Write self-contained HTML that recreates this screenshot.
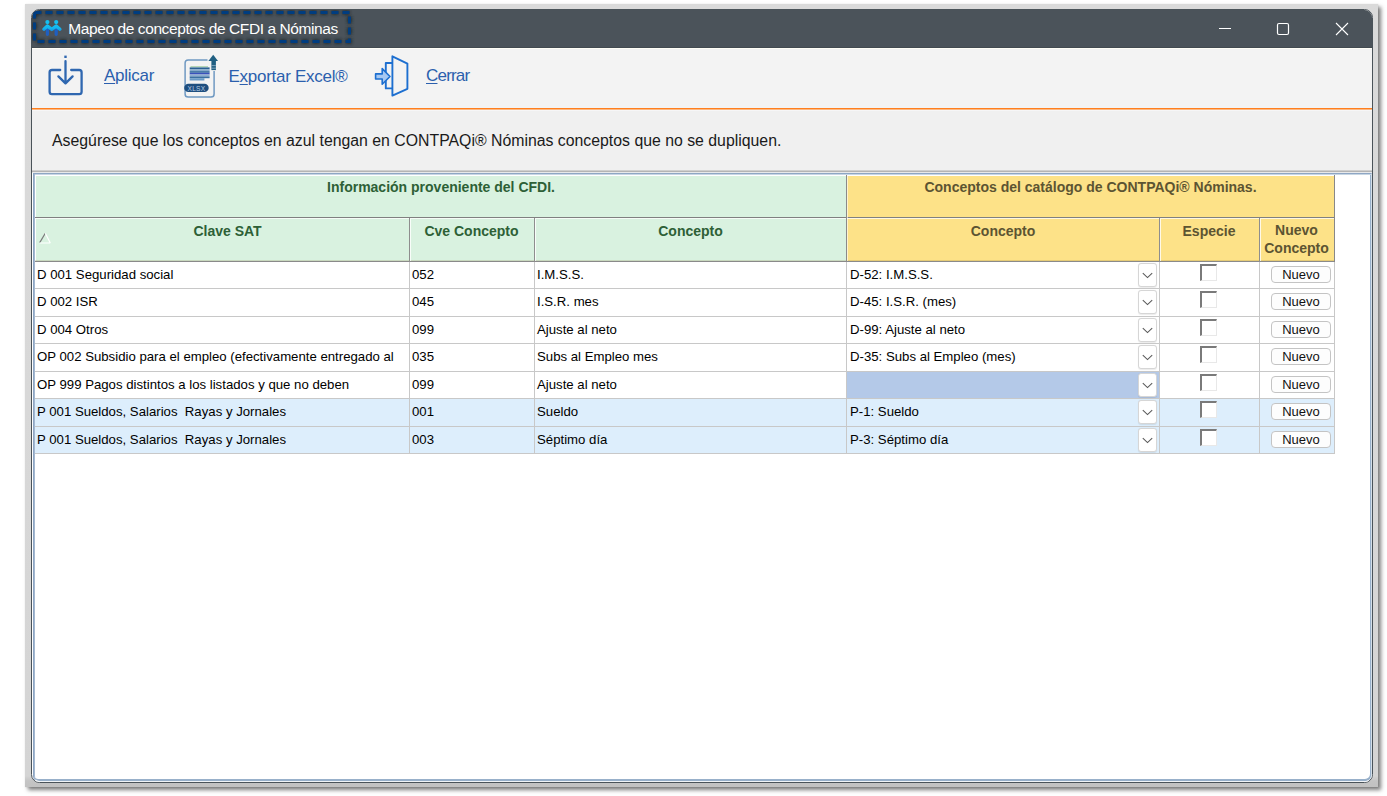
<!DOCTYPE html>
<html><head><meta charset="utf-8">
<style>
*{margin:0;padding:0;box-sizing:border-box}
html,body{width:1387px;height:796px;overflow:hidden;background:#fff;font-family:"Liberation Sans",sans-serif;position:relative}
.a{position:absolute}
#frame{left:25px;top:4px;width:1353px;height:783px;background:linear-gradient(to bottom,#dadada 0,#d8d8d8 400px,#d4d4d4 772px,#c4c4c4 777px,#c2c2c2 783px);box-shadow:0 0 1.5px 0.5px rgba(0,0,0,.10),3px 3px 4px rgba(0,0,0,.5)}
#win{left:31px;top:9px;width:1342px;height:774px;border:1px solid #4a5359;border-radius:8.5px;background:#fff;overflow:hidden}
#c{left:-32px;top:-10px;width:1387px;height:796px}
#title{left:0;top:0;width:1387px;height:48px;background:#4b535a;border-bottom:1px solid #424a50}
#tb{left:0;top:48px;width:1387px;height:60px;background:#f3f3f3;border-top:1px solid #fffef6}
#orange{left:0;top:108px;width:1387px;height:2px;background:linear-gradient(#ff7f1e 0,#ff7f1e 1px,#fcb780 1px)}
#info{left:0;top:110px;width:1387px;height:60px;background:#f0f0f0;border-top:1px solid #f6f6f7}
#sep{left:0;top:170px;width:1387px;height:1px;background:#cfcfcf}
#sep2{left:0;top:171px;width:1387px;height:2px;background:linear-gradient(#b4b4b4 0,#b4b4b4 1px,#e8e9ea 1px)}
#grid{left:33px;top:173px;width:1339px;height:609px;border:1px solid #8ea6c4;border-right-color:#d4dfe9;border-bottom-color:#f2f5f8;box-shadow:inset 1px 0 0 #a4b8d0,inset 0 1px 0 #c8d6e3,inset -1px -2px 0 #98b0ca;background:#fff;border-radius:0 0 6px 6px}
.t{white-space:pre;position:absolute;line-height:1}
.cell{font-size:13.2px;color:#000}
.hg{font-size:14px;font-weight:bold;color:#2d6036;text-align:center}
.hy{font-size:14px;font-weight:bold;color:#5c5432;text-align:center}
.ttl{font-size:15.5px;color:#fff;letter-spacing:-.41px}
.tbt{font-size:17px;color:#2b5fad}
.tbt u{text-decoration:underline;text-underline-offset:2px}
.inf{font-size:15.84px;color:#1a1a1a}
.dd{width:19px;height:24px;border:1px solid #d6d6d6;border-radius:3px;background:#fff;box-shadow:0 .5px 1px rgba(0,0,0,.08)}
.dd svg{position:absolute;left:-1px;top:-1px}
.cb{width:17px;height:17px;background:#fff;border-top:2px solid #7a7a7a;border-left:2px solid #7a7a7a;border-right:1px solid #e8e8e8;border-bottom:1px solid #e8e8e8}
.btn{width:60px;height:17px;border:1px solid #c4c4c4;border-radius:4px;background:#fdfdfd;font-size:13px;color:#111;text-align:center;line-height:15px}

</style></head><body>
<div id="frame" class="a"></div>
<div id="win" class="a"><div id="c" class="a">
  <div id="title" class="a"></div>
  <div id="tb" class="a"></div>
  <div id="orange" class="a"></div>
  <div id="info" class="a"></div>
  <div id="sep" class="a"></div>
  <div id="sep2" class="a"></div>
  <div id="grid" class="a"></div>

  <div class="a" style="left:36px;top:176px;width:811px;height:85px;background:#d9f2e0"></div>
  <div class="a" style="left:847px;top:176px;width:487px;height:85px;background:#fde288"></div>
  <div class="a" style="left:35px;top:218px;width:1299px;height:1px;background:rgba(255,255,255,.75)"></div>
  <div class="a" style="left:35px;top:217px;width:1300px;height:1px;background:#808080"></div>
  <div class="a" style="left:35px;top:260px;width:1299px;height:1px;background:rgba(120,100,40,.18)"></div>
  <div class="a" style="left:35px;top:261px;width:1300px;height:1px;background:#8a8a8a"></div>
  <div class="a" style="left:1334px;top:175px;width:1px;height:87px;background:#888"></div>
  <div class="a" style="left:846px;top:175px;width:1px;height:87px;background:#8a8a8a"></div>
  <div class="a" style="left:847px;top:176px;width:1px;height:85px;background:rgba(255,255,255,.6)"></div>
  <div class="a" style="left:409px;top:218px;width:1px;height:44px;background:#8e8e8e"></div>
  <div class="a" style="left:410px;top:219px;width:1px;height:42px;background:rgba(255,255,255,.8)"></div>
  <div class="a" style="left:534px;top:218px;width:1px;height:44px;background:#8e8e8e"></div>
  <div class="a" style="left:535px;top:219px;width:1px;height:42px;background:rgba(255,255,255,.8)"></div>
  <div class="a" style="left:1159px;top:218px;width:1px;height:44px;background:#8e8e8e"></div>
  <div class="a" style="left:1160px;top:219px;width:1px;height:42px;background:rgba(255,255,255,.8)"></div>
  <div class="a" style="left:1259px;top:218px;width:1px;height:44px;background:#8e8e8e"></div>
  <div class="a" style="left:1260px;top:219px;width:1px;height:42px;background:rgba(255,255,255,.8)"></div>

  <div class="t hg" style="left:35px;width:812px;top:179.7px">Información proveniente del CFDI.</div>
  <div class="t hy" style="left:847px;width:487px;top:179.7px">Conceptos del catálogo de CONTPAQi® Nóminas.</div>
  <div class="t hg" style="left:41px;width:373px;top:223.8px">Clave SAT</div>
  <div class="t hg" style="left:409px;width:125px;top:223.8px">Cve Concepto</div>
  <div class="t hg" style="left:534px;width:313px;top:223.8px">Concepto</div>
  <div class="t hy" style="left:847px;width:312px;top:223.8px">Concepto</div>
  <div class="t hy" style="left:1159px;width:100px;top:223.8px">Especie</div>
  <div class="t hy" style="left:1259px;width:75px;top:222.2px;line-height:17.5px">Nuevo<br>Concepto</div>
  <svg class="a" style="left:36px;top:230px" width="18" height="16">
    <path d="M3.7 12.6 L9.3 3.3" stroke="#7a7a7a" stroke-width="1.2" fill="none"/>
    <path d="M9.3 3.3 L14.3 13 M3.7 13 H14.3" stroke="#ffffff" stroke-width="1.2" fill="none"/>
  </svg>

<div class="a" style="left:35px;top:262px;width:1299px;height:26px;background:#fff"></div><div class="t cell" style="left:37px;top:268px">D 001 Seguridad social</div><div class="t cell" style="left:412px;top:268px">052</div><div class="t cell" style="left:537px;top:268px">I.M.S.S.</div><div class="t cell" style="left:850px;top:268px">D-52: I.M.S.S.</div><div class="a dd" style="left:1138px;top:263px"><svg width="19" height="24"><path d="M4.8 10.2 L9.5 14.6 L14.2 10.2" fill="none" stroke="#5a5a5a" stroke-width="1.1"/></svg></div><div class="a cb" style="left:1200px;top:264px"></div><div class="a btn" style="left:1271px;top:266px">Nuevo</div><div class="a" style="left:35px;top:288px;width:1300px;height:1px;background:#c8c8c8"></div><div class="a" style="left:35px;top:289px;width:1299px;height:27px;background:#fff"></div><div class="t cell" style="left:37px;top:295px">D 002 ISR</div><div class="t cell" style="left:412px;top:295px">045</div><div class="t cell" style="left:537px;top:295px">I.S.R. mes</div><div class="t cell" style="left:850px;top:295px">D-45: I.S.R. (mes)</div><div class="a dd" style="left:1138px;top:290px"><svg width="19" height="24"><path d="M4.8 10.2 L9.5 14.6 L14.2 10.2" fill="none" stroke="#5a5a5a" stroke-width="1.1"/></svg></div><div class="a cb" style="left:1200px;top:291px"></div><div class="a btn" style="left:1271px;top:293px">Nuevo</div><div class="a" style="left:35px;top:316px;width:1300px;height:1px;background:#c8c8c8"></div><div class="a" style="left:35px;top:317px;width:1299px;height:26px;background:#fff"></div><div class="t cell" style="left:37px;top:323px">D 004 Otros</div><div class="t cell" style="left:412px;top:323px">099</div><div class="t cell" style="left:537px;top:323px">Ajuste al neto</div><div class="t cell" style="left:850px;top:323px">D-99: Ajuste al neto</div><div class="a dd" style="left:1138px;top:318px"><svg width="19" height="24"><path d="M4.8 10.2 L9.5 14.6 L14.2 10.2" fill="none" stroke="#5a5a5a" stroke-width="1.1"/></svg></div><div class="a cb" style="left:1200px;top:319px"></div><div class="a btn" style="left:1271px;top:321px">Nuevo</div><div class="a" style="left:35px;top:343px;width:1300px;height:1px;background:#c8c8c8"></div><div class="a" style="left:35px;top:344px;width:1299px;height:27px;background:#fff"></div><div class="t cell" style="left:37px;top:350px">OP 002 Subsidio para el empleo (efectivamente entregado al</div><div class="t cell" style="left:412px;top:350px">035</div><div class="t cell" style="left:537px;top:350px">Subs al Empleo mes</div><div class="t cell" style="left:850px;top:350px">D-35: Subs al Empleo (mes)</div><div class="a dd" style="left:1138px;top:345px"><svg width="19" height="24"><path d="M4.8 10.2 L9.5 14.6 L14.2 10.2" fill="none" stroke="#5a5a5a" stroke-width="1.1"/></svg></div><div class="a cb" style="left:1200px;top:346px"></div><div class="a btn" style="left:1271px;top:348px">Nuevo</div><div class="a" style="left:35px;top:371px;width:1300px;height:1px;background:#c8c8c8"></div><div class="a" style="left:35px;top:372px;width:1299px;height:26px;background:#fff"></div><div class="a" style="left:847px;top:372px;width:312px;height:26px;background:#b4c9e8"></div><div class="t cell" style="left:37px;top:378px">OP 999 Pagos distintos a los listados y que no deben</div><div class="t cell" style="left:412px;top:378px">099</div><div class="t cell" style="left:537px;top:378px">Ajuste al neto</div><div class="a dd" style="left:1138px;top:373px"><svg width="19" height="24"><path d="M4.8 10.2 L9.5 14.6 L14.2 10.2" fill="none" stroke="#5a5a5a" stroke-width="1.1"/></svg></div><div class="a cb" style="left:1200px;top:374px"></div><div class="a btn" style="left:1271px;top:376px">Nuevo</div><div class="a" style="left:35px;top:398px;width:1300px;height:1px;background:#c8c8c8"></div><div class="a" style="left:35px;top:399px;width:1299px;height:27px;background:#ddeefc"></div><div class="t cell" style="left:37px;top:405px">P 001 Sueldos, Salarios  Rayas y Jornales</div><div class="t cell" style="left:412px;top:405px">001</div><div class="t cell" style="left:537px;top:405px">Sueldo</div><div class="t cell" style="left:850px;top:405px">P-1: Sueldo</div><div class="a dd" style="left:1138px;top:400px"><svg width="19" height="24"><path d="M4.8 10.2 L9.5 14.6 L14.2 10.2" fill="none" stroke="#5a5a5a" stroke-width="1.1"/></svg></div><div class="a cb" style="left:1200px;top:401px"></div><div class="a btn" style="left:1271px;top:403px">Nuevo</div><div class="a" style="left:35px;top:426px;width:1300px;height:1px;background:#c8c8c8"></div><div class="a" style="left:35px;top:427px;width:1299px;height:26px;background:#ddeefc"></div><div class="t cell" style="left:37px;top:433px">P 001 Sueldos, Salarios  Rayas y Jornales</div><div class="t cell" style="left:412px;top:433px">003</div><div class="t cell" style="left:537px;top:433px">Séptimo día</div><div class="t cell" style="left:850px;top:433px">P-3: Séptimo día</div><div class="a dd" style="left:1138px;top:428px"><svg width="19" height="24"><path d="M4.8 10.2 L9.5 14.6 L14.2 10.2" fill="none" stroke="#5a5a5a" stroke-width="1.1"/></svg></div><div class="a cb" style="left:1200px;top:429px"></div><div class="a btn" style="left:1271px;top:431px">Nuevo</div><div class="a" style="left:35px;top:453px;width:1300px;height:1px;background:#c8c8c8"></div><div class="a" style="left:409px;top:262px;width:1px;height:191px;background:#c8c8c8"></div><div class="a" style="left:534px;top:262px;width:1px;height:191px;background:#c8c8c8"></div><div class="a" style="left:846px;top:262px;width:1px;height:191px;background:#c8c8c8"></div><div class="a" style="left:1159px;top:262px;width:1px;height:191px;background:#c8c8c8"></div><div class="a" style="left:1259px;top:262px;width:1px;height:191px;background:#c8c8c8"></div><div class="a" style="left:1334px;top:262px;width:1px;height:191px;background:#c8c8c8"></div>

  <svg class="a" style="left:0;top:0" width="400" height="60">
    <defs><filter id="bl" x="-10%" y="-40%" width="120%" height="180%"><feGaussianBlur stdDeviation="1.7"/></filter></defs>
    <rect x="34.5" y="12.5" width="315" height="29" fill="none" stroke="#1c2226" stroke-width="5" stroke-dasharray="7 4" filter="url(#bl)" opacity=".8"/>
    <rect x="34.5" y="12.5" width="315" height="29" fill="none" stroke="#003d80" stroke-width="3" stroke-dasharray="7 4"/>
    <defs><linearGradient id="armg" gradientUnits="userSpaceOnUse" x1="0" y1="24.5" x2="0" y2="31.5"><stop offset="0" stop-color="#16c2f4"/><stop offset=".55" stop-color="#12b4ee"/><stop offset="1" stop-color="#1a8ade"/></linearGradient></defs>
    <g stroke-linecap="round" fill="none">
      <path d="M47.4 29.6 V34.3 M56.2 29.6 V34.3" stroke="#1f5fc0" stroke-width="3.3"/>
      <path d="M43.9 29.2 L47.4 26.1 L51.8 29.4 L56.2 26.1 L59.9 29.2" stroke="url(#armg)" stroke-width="3.4" stroke-linejoin="round"/>
    </g>
    <circle cx="47.4" cy="22.1" r="2.1" fill="#14c0f2"/>
    <circle cx="56.2" cy="22.1" r="2.1" fill="#14c0f2"/>
  </svg>
  <svg class="a" style="left:1200px;top:10px" width="170" height="36">
    <path d="M19 18.5 H31" stroke="#fff" stroke-width="1.2"/>
    <rect x="77.5" y="13.5" width="11" height="11" rx="1.5" fill="none" stroke="#fff" stroke-width="1.2"/>
    <path d="M136 13 L148 25 M148 13 L136 25" stroke="#fff" stroke-width="1.1"/>
  </svg>


  <svg class="a" style="left:0;top:47px" width="460" height="60">
    <g transform="translate(0,-47)">
    <g fill="none" stroke="#2f67b0" stroke-width="2.3" stroke-linecap="round" stroke-linejoin="round">
      <path d="M60.2 70 H52 Q49.6 70 49.6 72.4 V91.8 Q49.6 94.2 52 94.2 H79.2 Q81.6 94.2 81.6 91.8 V72.4 Q81.6 70 79.2 70 H71.2"/>
      <path d="M65.5 61.2 V83.2 M58.4 76.4 L65.5 83.4 L72.6 76.4"/>
    </g>
    <rect x="64.3" y="55.6" width="2.4" height="2.4" fill="#2f67b0"/>
    <path d="M207.5 59.9 H188.2 Q185.1 59.9 185.1 63 V93.9 Q185.1 97 188.2 97 H211 Q214.1 97 214.1 93.9 V71" fill="none" stroke="#6f99c2" stroke-width="1.5"/>
    <path d="M190.5 66.6 H208" stroke="#9ccc9c" stroke-width=".8"/>
    <rect x="189.7" y="67.4" width="19.9" height="1.8" fill="#2a6292"/>
    <rect x="189.7" y="69.2" width="19.9" height="1.9" fill="#86a9cb"/>
    <rect x="189.7" y="71.1" width="19.9" height="1.7" fill="#3a70a2"/>
    <rect x="189.7" y="72.8" width="19.9" height="1.7" fill="#3a52bc"/>
    <rect x="189.7" y="74.5" width="19.9" height="1.9" fill="#8eaed0"/>
    <rect x="189.7" y="76.4" width="19.9" height="1.8" fill="#3a70a2"/>
    <rect x="189.7" y="78.2" width="14.7" height="2.3" fill="#6c9cc8"/>
    <rect x="184.2" y="83.7" width="24.5" height="8.4" rx="4.2" fill="#1f4f7f"/>
    <text x="196.4" y="90.6" font-family="Liberation Sans" font-size="6.6" fill="#b8cce4" text-anchor="middle" letter-spacing=".2">XLSX</text>
    <path d="M208.4 61 L213.2 54.7 L218 61 Z" fill="#1f5f82"/>
    <rect x="211.4" y="60.5" width="4.5" height="9.6" fill="#1f5f82"/>
    <path d="M211.4 65.6 H215.9 M211.4 68.2 H215.9" stroke="#a8c0d4" stroke-width=".7"/>
    <g fill="none" stroke="#1d6fd0" stroke-width="1.9" stroke-linejoin="round">
      <path d="M392.4 56.3 L407.4 63.6 V88.8 L392.4 95.6 Z"/>
      <path d="M392.4 63 H385.8 V88.4 H392.4"/>
    </g>
    <path d="M375.6 73.9 H382.2 V68.6 L390 76.5 L382.2 84.2 V79 H375.6 Z" fill="#a6c8f2" stroke="#1d6fd0" stroke-width="1.6" stroke-linejoin="round"/>
    </g>
  </svg>

  <div class="t ttl" style="left:68.3px;top:21px">Mapeo de conceptos de CFDI a Nóminas</div>
  <div class="t tbt" style="left:104px;top:67.3px;letter-spacing:-.25px"><u>A</u>plicar</div>
  <div class="t tbt" style="left:228.5px;top:67.6px;letter-spacing:-.27px">E<u>x</u>portar Excel®</div>
  <div class="t tbt" style="left:426px;top:67.2px;letter-spacing:-.8px"><u>C</u>errar</div>
  <div class="t inf" style="left:52px;top:133px">Asegúrese que los conceptos en azul tengan en CONTPAQi® Nóminas conceptos que no se dupliquen.</div>
</div></div>
</body></html>
